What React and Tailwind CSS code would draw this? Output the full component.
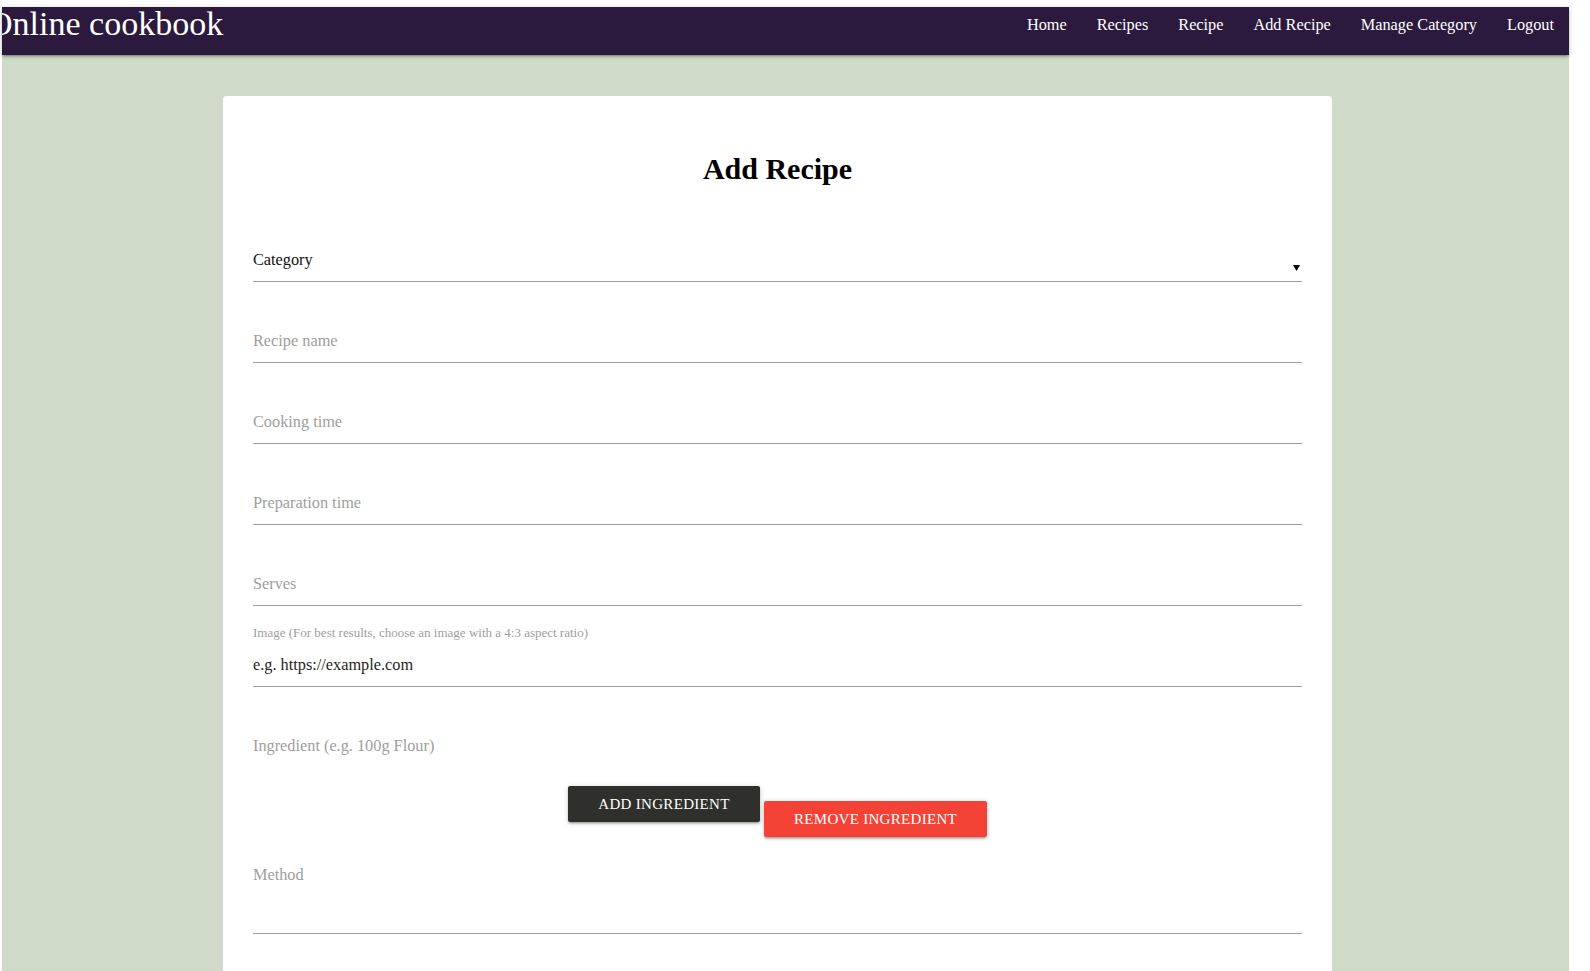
import React from 'react'

const serif = { fontFamily: '"Liberation Serif", "Times New Roman", serif' }

const links = ['Home', 'Recipes', 'Recipe', 'Add Recipe', 'Manage Category', 'Logout']

const App = () => {
  return (
    <div className="min-h-screen bg-white pt-[7px]" style={serif}>
      <div className="ml-[2px] w-[1567px] bg-[#cfdbc8] pb-[10px]">
        {/* navbar */}
        <nav className="h-[48px] bg-[#2c1a3e] flex justify-between items-start overflow-hidden shadow-[0_2px_2px_0_rgba(0,0,0,0.14),0_3px_1px_-2px_rgba(0,0,0,0.12),0_1px_5px_0_rgba(0,0,0,0.2)] relative z-10">
          <a className="ml-[-14px] text-white text-[34px] leading-[33px] whitespace-nowrap">Online cookbook</a>
          <ul className="flex items-start">
            {links.map((l) => (
              <li key={l} className="px-[15px] text-white text-[16.3px] leading-[36px] whitespace-nowrap">
                {l}
              </li>
            ))}
          </ul>
        </nav>

        {/* form card */}
        <div className="ml-[221px] w-[1109px] mt-[41px] bg-white rounded-[4px] px-[30px] pt-[55px] pb-[60px] flex flex-col">
          <h4 className="text-[30px] font-bold leading-[36px] text-center text-black mb-[14px]">Add Recipe</h4>

          <div className="mt-[32px] h-[49px] border-b border-[#9e9e9e] pt-[17px] flex justify-between items-start">
            <span className="text-[16.3px] leading-[20px] text-[#111]">Category</span>
            <svg className="w-[7px] h-[6px] mt-[15px] mr-[2px]" viewBox="0 0 7 6">
              <polygon points="0,0 7,0 3.5,6" fill="#000" />
            </svg>
          </div>

          <div className="mt-[32px] h-[49px] border-b border-[#9e9e9e] pt-[17px] text-[16.3px] leading-[20px] text-[#9e9e9e]">Recipe name</div>
          <div className="mt-[32px] h-[49px] border-b border-[#9e9e9e] pt-[17px] text-[16.3px] leading-[20px] text-[#9e9e9e]">Cooking time</div>
          <div className="mt-[32px] h-[49px] border-b border-[#9e9e9e] pt-[17px] text-[16.3px] leading-[20px] text-[#9e9e9e]">Preparation time</div>
          <div className="mt-[32px] h-[49px] border-b border-[#9e9e9e] pt-[17px] text-[16.3px] leading-[20px] text-[#9e9e9e]">Serves</div>

          <div className="h-[32px] pt-[20px] text-[13px] leading-[13px] text-[#9e9e9e]">
            Image (For best results, choose an image with a 4:3 aspect ratio)
          </div>
          <div className="h-[49px] border-b border-[#9e9e9e] pt-[17px] text-[16.3px] leading-[20px] text-[#1f1f24]">
            e.g. https://example.com
          </div>

          <div className="mt-[32px] h-[48px] pt-[17px] text-[16.3px] leading-[20px] text-[#9e9e9e]">Ingredient (e.g. 100g Flour)</div>

          <div className="mt-[19px] flex justify-center items-start gap-[4px]">
            <button className="w-[192px] h-[36px] rounded-[2px] bg-[#2f2f2b] text-white text-[15px] leading-[36px] uppercase tracking-[0.3px] shadow-[0_2px_2px_0_rgba(0,0,0,0.14),0_3px_1px_-2px_rgba(0,0,0,0.12),0_1px_5px_0_rgba(0,0,0,0.2)]">
              Add Ingredient
            </button>
            <button className="mt-[15px] w-[223px] h-[36px] rounded-[2px] bg-[#f44336] text-white text-[15px] leading-[36px] uppercase tracking-[0.3px] shadow-[0_2px_2px_0_rgba(0,0,0,0.14),0_3px_1px_-2px_rgba(0,0,0,0.12),0_1px_5px_0_rgba(0,0,0,0.2)]">
              Remove Ingredient
            </button>
          </div>

          <div className="mt-[11px] h-[86px] border-b border-[#9e9e9e] pt-[17px] text-[16.3px] leading-[20px] text-[#9e9e9e]">Method</div>
        </div>
      </div>
    </div>
  )
}

export default App
